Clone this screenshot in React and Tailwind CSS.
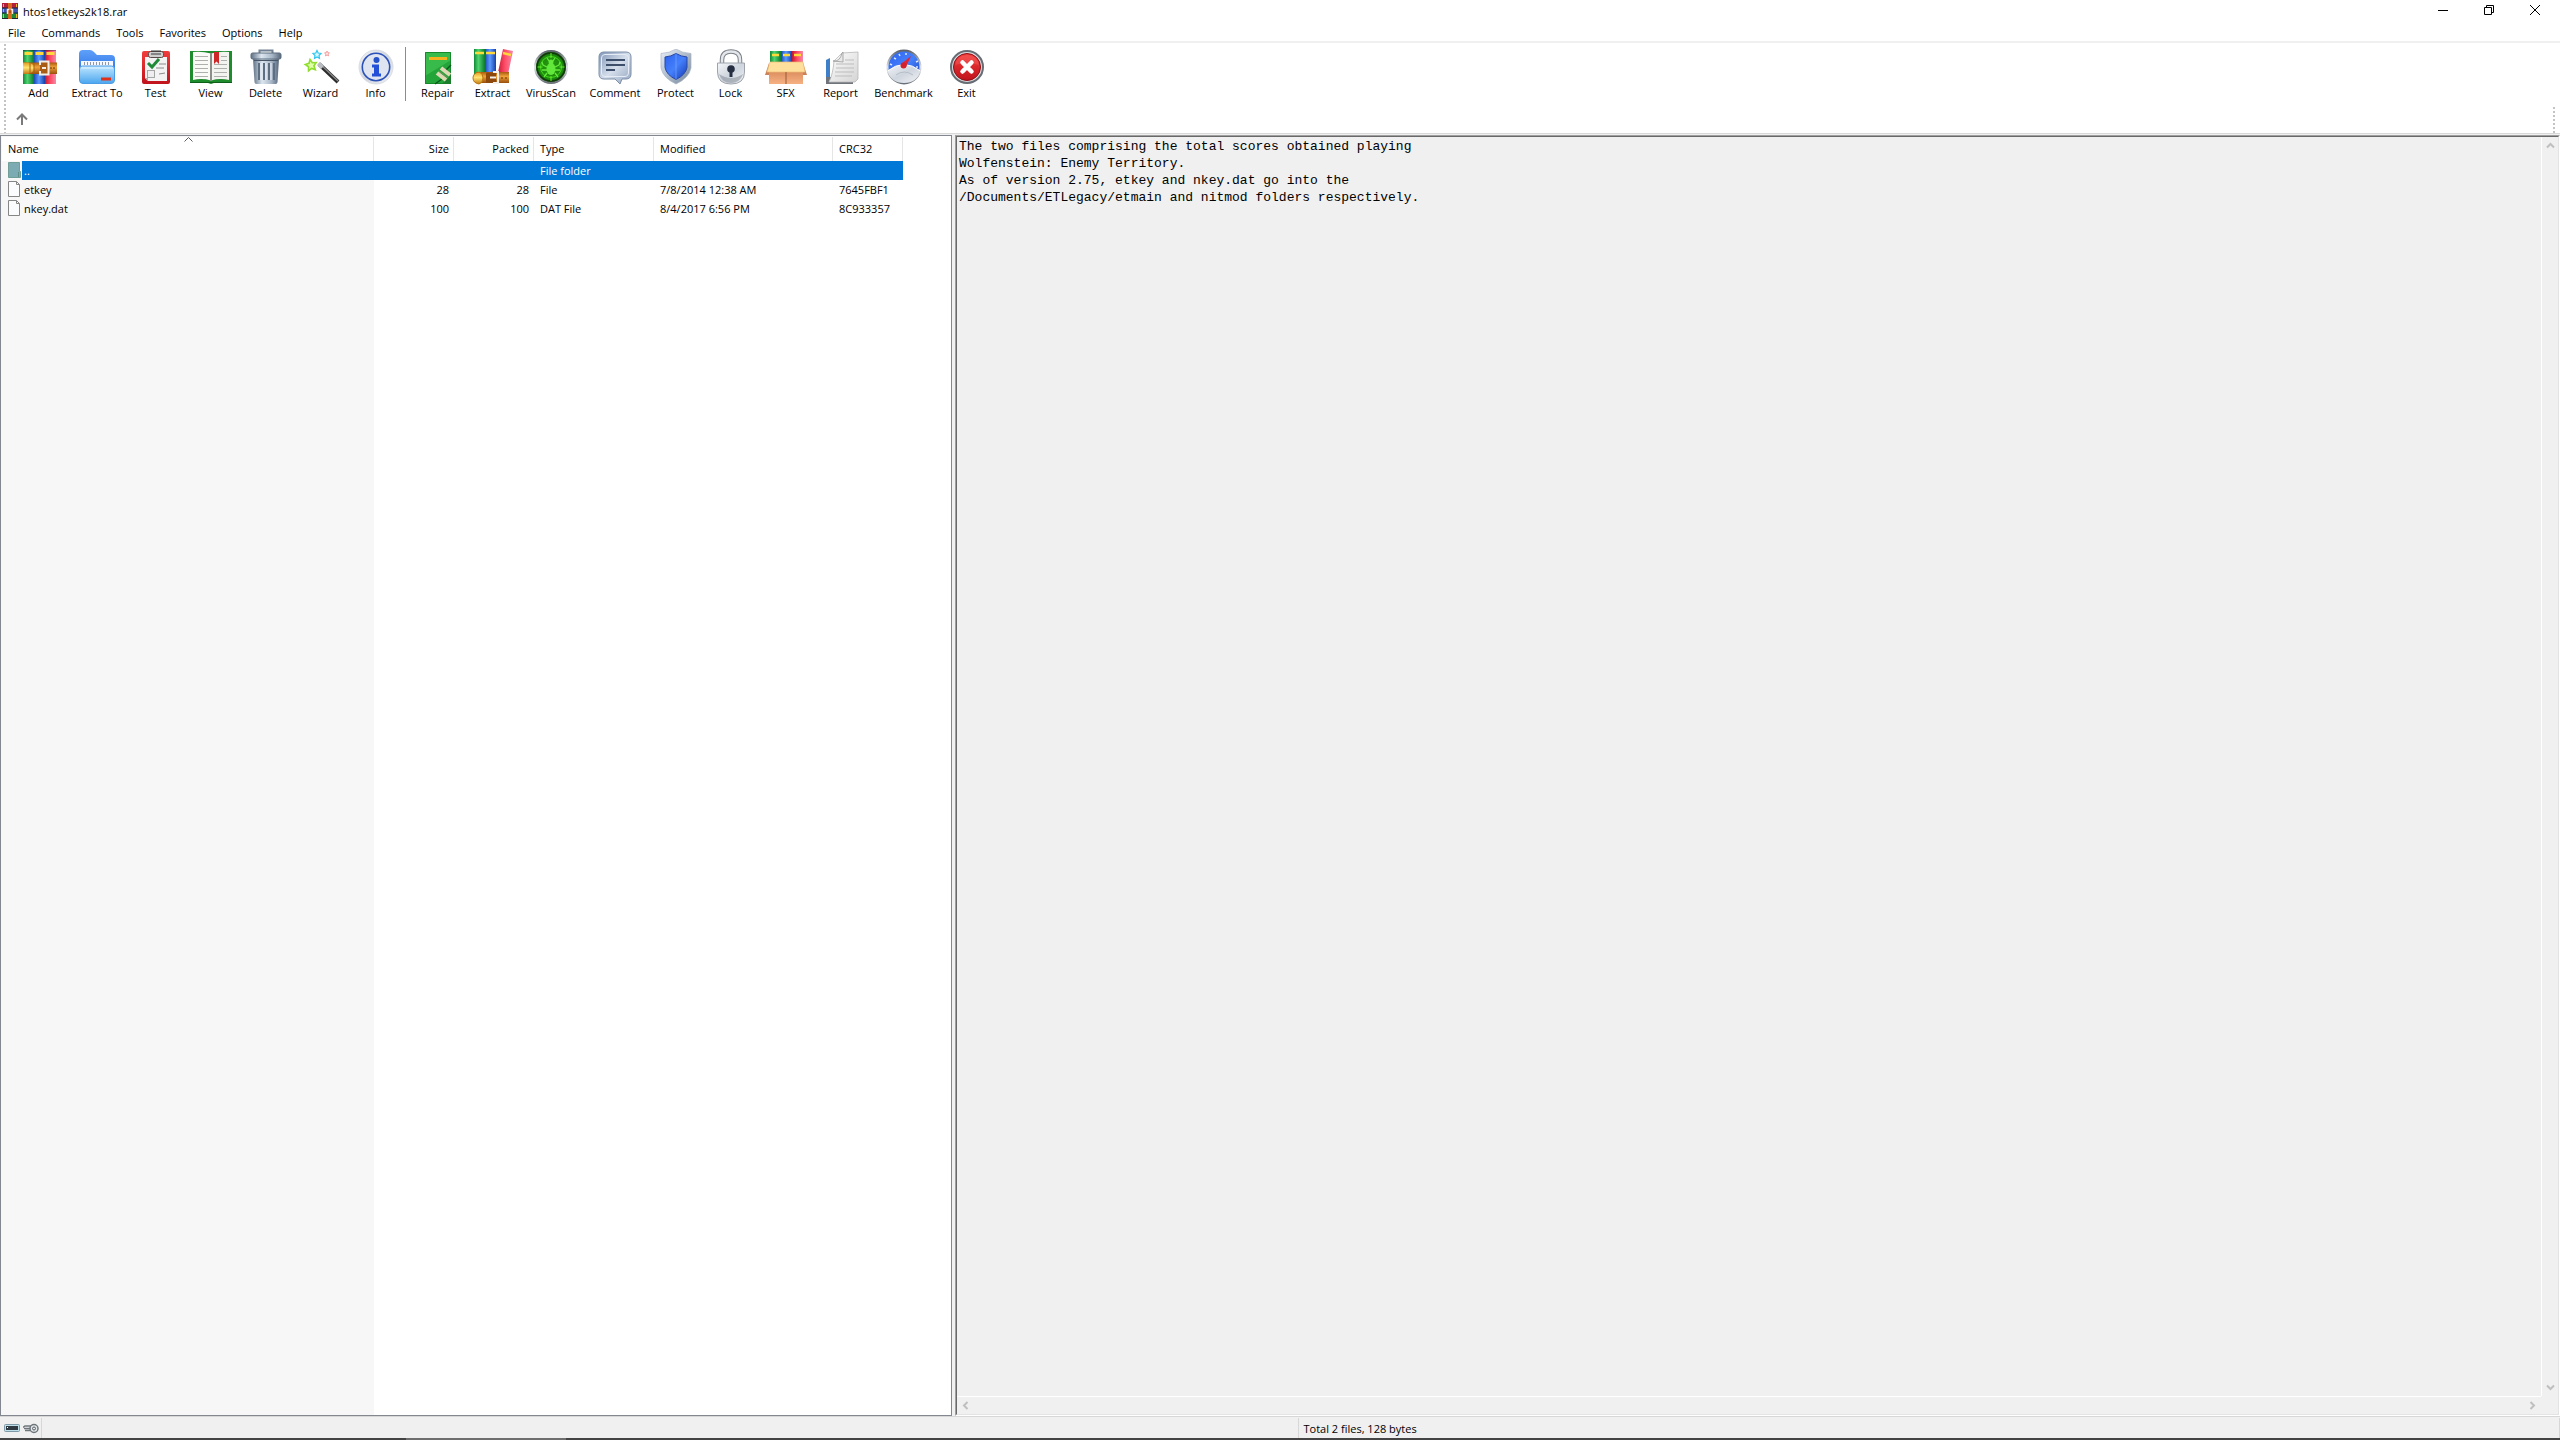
import React from "react";

const MENUS = ["File", "Commands", "Tools", "Favorites", "Options", "Help"];

const Svg = ({ children }) => (
  <svg className="block h-[36px] w-[44px]" viewBox="0 0 44 36" aria-hidden="true">
    {children}
  </svg>
);

// gradients shared by all of the toolbar drawings
const Gradients = () => (
  <svg className="absolute h-0 w-0" aria-hidden="true">
    <defs>
      <linearGradient id="green" x1="0" x2="1" y1="0" y2="0">
        <stop offset="0" stopColor="#0f8a35" />
        <stop offset=".4" stopColor="#4fd36f" />
        <stop offset="1" stopColor="#0c7a2c" />
      </linearGradient>
      <linearGradient id="blue" x1="0" x2="1" y1="0" y2="0">
        <stop offset="0" stopColor="#1c49b8" />
        <stop offset=".45" stopColor="#5c9bff" />
        <stop offset="1" stopColor="#173fa6" />
      </linearGradient>
      <linearGradient id="pink" x1="0" x2="1" y1="0" y2="0">
        <stop offset="0" stopColor="#c4152e" />
        <stop offset=".5" stopColor="#ff4d68" />
        <stop offset="1" stopColor="#f48aa8" />
      </linearGradient>
      <linearGradient id="belt" x1="0" x2="0" y1="0" y2="1">
        <stop offset="0" stopColor="#a85a10" />
        <stop offset=".4" stopColor="#f0a23a" />
        <stop offset="1" stopColor="#9a4f0c" />
      </linearGradient>
      <linearGradient id="gold" x1="0" x2="0" y1="0" y2="1">
        <stop offset="0" stopColor="#e09a1c" />
        <stop offset=".45" stopColor="#ffe372" />
        <stop offset="1" stopColor="#c47a10" />
      </linearGradient>
      <linearGradient id="folderBack" x1="0" x2="0" y1="0" y2="1">
        <stop offset="0" stopColor="#5ea0f8" />
        <stop offset="1" stopColor="#2a6ee6" />
      </linearGradient>
      <linearGradient id="folderFront" x1="0" x2="0" y1="0" y2="1">
        <stop offset="0" stopColor="#bfe6ff" />
        <stop offset="1" stopColor="#4ba6ee" />
      </linearGradient>
      <linearGradient id="red" x1="0" x2="0" y1="0" y2="1">
        <stop offset="0" stopColor="#f23c3c" />
        <stop offset="1" stopColor="#c0131b" />
      </linearGradient>
      <linearGradient id="paper" x1="0" x2="1" y1="0" y2="1">
        <stop offset="0" stopColor="#ffffff" />
        <stop offset="1" stopColor="#d4d4d4" />
      </linearGradient>
      <linearGradient id="steel" x1="0" x2="1" y1="0" y2="0">
        <stop offset="0" stopColor="#5f7184" />
        <stop offset=".35" stopColor="#dce6f0" />
        <stop offset=".7" stopColor="#a9b8c8" />
        <stop offset="1" stopColor="#56677a" />
      </linearGradient>
      <linearGradient id="silver" x1="0" x2="1" y1="0" y2="1">
        <stop offset="0" stopColor="#f4f6f9" />
        <stop offset=".5" stopColor="#cfd5de" />
        <stop offset="1" stopColor="#f2f4f7" />
      </linearGradient>
      <linearGradient id="ring" x1="0" x2="0" y1="0" y2="1">
        <stop offset="0" stopColor="#5d636a" />
        <stop offset=".5" stopColor="#dfe3e8" />
        <stop offset="1" stopColor="#6b7178" />
      </linearGradient>
      <linearGradient id="bubble" x1="0" x2="1" y1="0" y2="1">
        <stop offset="0" stopColor="#8196b8" />
        <stop offset=".5" stopColor="#d5deeb" />
        <stop offset="1" stopColor="#90a3bf" />
      </linearGradient>
      <linearGradient id="shield" x1="0" x2="1" y1="0" y2="1">
        <stop offset="0" stopColor="#2b62ee" />
        <stop offset=".5" stopColor="#4580fb" />
        <stop offset="1" stopColor="#1539b6" />
      </linearGradient>
      <linearGradient id="rim" x1="0" x2="1" y1="0" y2="1">
        <stop offset="0" stopColor="#e9f0f8" />
        <stop offset="1" stopColor="#73859b" />
      </linearGradient>
      <linearGradient id="box" x1="0" x2="0" y1="0" y2="1">
        <stop offset="0" stopColor="#d98a5a" />
        <stop offset="1" stopColor="#f6b183" />
      </linearGradient>
      <radialGradient id="scan">
        <stop offset="0" stopColor="#2a9a10" />
        <stop offset=".75" stopColor="#1c8a0c" />
        <stop offset="1" stopColor="#0b5206" />
      </radialGradient>
    </defs>
  </svg>
);

const AddIcon = () => (
  <Svg>
    <rect x="6" y="1" width="11" height="34" fill="url(#green)" />
    <rect x="17" y="1" width="11" height="34" fill="url(#blue)" />
    <rect x="28" y="1" width="11" height="34" fill="url(#pink)" />
    <path d="M6 1.500h11M17 1.500h11M28 1.500h11" stroke="#123" strokeOpacity=".4" />
    <path d="M7.500 4.500h8M18.500 4.500h8M29.500 4.500h8" stroke="#ffd83a" strokeWidth="3" />
    <rect x="6" y="13.500" width="34" height="11.500" fill="url(#belt)" />
    <path d="M6 13.500h5q6 1 6 5.500t-6 6H6z" fill="url(#gold)" />
    <path d="M13 14v10M17 14v10" stroke="#a86410" />
    <rect x="23" y="13" width="8" height="12" rx="1" fill="#a85c14" />
    <path d="M23 16v-3.500h8.500v13H23V22M25 19h4" fill="none" stroke="#f2efe8" strokeWidth="2" />
    <path d="M34 18v2M37 18v2" stroke="#6b3505" />
  </Svg>
);

const ExtractToIcon = () => (
  <Svg>
    <path d="M4 5q0-4 4-4h7q2 0 4 2l3 3h14q4 0 4 4v16H4z" fill="url(#folderBack)" />
    <path d="M6 12h32v10H6z" fill="#f4f7fb" />
    <path d="M9 14.500h27" stroke="#8f99a5" strokeWidth="3" strokeDasharray="1 2" />
    <path d="M4.500 20q0-3 3-3h29q3 0 3 3v11q0 3.500-3.500 3.500H8q-3.500 0-3.500-3.500z" fill="url(#folderFront)" stroke="#4d9ce6" />
    <path d="M6 19h32" stroke="#e3f5ff" />
    <path d="M26 30h10" stroke="#e0301a" strokeWidth="3" />
  </Svg>
);

const TestIcon = () => (
  <Svg>
    <rect x="8" y="2" width="28" height="33" rx="2" fill="url(#red)" />
    <path d="M11 8h22v24H14l-3-3z" fill="#f3f3f3" />
    <path d="M11 29l3 3v-3z" fill="#aaa" />
    <rect x="14.500" y="2.500" width="15" height="6" rx="2" fill="#cfcfcf" stroke="#5b4a4a" />
    <path d="M17 2h10M17 5h10" stroke="#3b3b3b" />
    <path d="M14 14l4 4 7-8" fill="none" stroke="#1f8a38" strokeWidth="3" />
    <path d="M25 15h7M22 19h8M25 25l6-1" stroke="#8b8b8b" />
    <rect x="13.500" y="21.500" width="7" height="7" fill="#eee" stroke="#a5a5a5" />
  </Svg>
);

const ViewIcon = () => (
  <Svg>
    <path d="M1 2h42v32H25l-3 1-3-1H1z" fill="#1e8b2d" />
    <path d="M1 33.500h42" stroke="#0e5f1a" />
    <path d="M4 3q9-1 18 1.500v27Q13 29 4 31z" fill="#fafaf7" />
    <path d="M40 3q-9-1-18 1.500v27Q31 29 40 31z" fill="#f3f3ef" />
    <path d="M22 4v28" stroke="#8b8f88" strokeWidth="2" />
    <path d="M6 7.500h13M6 11.500h13M6 15.500h13M6 19.500h13M6 23.500h13M6 27.500h13M25 15.500h13M25 19.500h13M25 23.500h13M25 27.500h13M32 7.500h6M32 11.500h6" stroke="#aeb0ad" />
    <path d="M25 3h5v12l-2.500-2.500L25 15z" fill="#cf2727" />
  </Svg>
);

const DeleteIcon = () => (
  <Svg>
    <path d="M15.500 4V1.500h13V4" fill="none" stroke="#708294" strokeWidth="2" />
    <path d="M9 10h26l-1.500 23q0 2-2 2h-19q-2 0-2-2z" fill="url(#steel)" />
    <rect x="7" y="4" width="30" height="6" rx="1.500" fill="url(#steel)" stroke="#5b6c7e" />
    <path d="M15 14v17M20 14v17M25 14v17M30 14v17" stroke="#5d6f83" strokeWidth="2" />
    <path d="M17 14v17M22 14v17M27 14v17" stroke="#eef3f8" />
    <path d="M10 11.500h24" stroke="#48586a" />
  </Svg>
);

const STAR = "M0-5l1.500 3.200 3.500.5-2.500 2.500.6 3.600L0 3.100l-3.100 1.700.6-3.600L-5-1.300l3.500-.5z";

const WizardIcon = () => (
  <Svg>
    <path d={STAR} transform="translate(12 16) scale(1.100) rotate(-10)" fill="#dfffa8" stroke="#8fdd2f" strokeWidth="1.500" />
    <path d={STAR} transform="translate(18 5.500) scale(.8)" fill="#d4f8ff" stroke="#35c6f0" strokeWidth="1.500" />
    <path d={STAR} transform="translate(28 4.500) scale(.5)" fill="#ffe3e3" stroke="#f08a8a" strokeWidth="1.500" />
    <path d="M20 15l19 18" stroke="#2c2c2c" strokeWidth="4" />
    <path d="M20 14l19 18" stroke="#8c8c8c" strokeWidth="1.200" />
    <path d="M19.500 14.500l4 4" stroke="#b9bcc0" strokeWidth="4" />
  </Svg>
);

const InfoIcon = () => (
  <Svg>
    <circle cx="22" cy="18" r="17" fill="url(#silver)" stroke="#d3d7dd" strokeWidth=".8" />
    <circle cx="22" cy="18" r="13.700" fill="#dfe5f0" stroke="#2b51b8" strokeWidth="1.600" />
    <circle cx="22.500" cy="11" r="3" fill="#2450c8" />
    <path d="M18 15.500h7v9h2v3h-9v-3h2v-6h-2z" fill="#2450d8" />
  </Svg>
);

const RepairIcon = () => (
  <Svg>
    <rect x="9" y="3" width="26" height="32" fill="#24a53a" />
    <path d="M9 3h26v8L9 27z" fill="#39bb4c" />
    <path d="M9.500 3.500h25v31h-25z" fill="none" stroke="#168a2b" />
    <path d="M13 9.500h18" stroke="#f5b21e" strokeWidth="3" />
    <path d="M35 16l-7 7M26 30l-7 5" stroke="#0c5a1c" strokeWidth="1.500" />
    <path d="M35 26v9h-9z" fill="#1a7e2d" />
    <path d="M25 19l9 7M21 24l9 7" stroke="#ded7b4" strokeWidth="4" />
    <path d="M23 22l9 7" stroke="#7e8a5e" />
  </Svg>
);

const ExtractIcon = () => (
  <Svg>
    <rect x="3" y="0" width="11" height="30" fill="url(#green)" />
    <rect x="14" y="0" width="11" height="30" fill="url(#blue)" />
    <path d="M32 0l10 2-6 28-10-2z" fill="url(#pink)" />
    <path d="M4 4h9M15 4h9M32 4l8 2" stroke="#ffd83a" strokeWidth="2.500" />
    <rect x="4" y="23" width="34" height="11" fill="url(#belt)" />
    <path d="M8 23q-6 1-6 6t6 6q4-1 4-6t-4-6z" fill="url(#gold)" stroke="#b8740f" />
    <rect x="15" y="23.500" width="10" height="10.500" rx="1" fill="#8d480c" />
    <path d="M22 23h5v11h-5M19 28.500h6" fill="none" stroke="#f3f0ea" strokeWidth="2" />
    <path d="M31 28v2M35 28v2" stroke="#6b3505" />
  </Svg>
);

const VirusScanIcon = () => (
  <Svg>
    <circle cx="22" cy="18" r="16" fill="url(#scan)" stroke="url(#ring)" strokeWidth="2" />
    <circle cx="22" cy="18" r="14" fill="none" stroke="#14380d" strokeWidth="1.500" />
    <circle cx="22" cy="18" r="10.500" fill="none" stroke="#47d81e" strokeWidth="1" />
    <path d="M22 4v5M22 27v5M8.500 18h5M30.500 18h5" stroke="#62f02e" />
    <ellipse cx="22" cy="20" rx="4.500" ry="6" fill="#62e83a" />
    <circle cx="22" cy="13" r="2.500" fill="#62e83a" />
    <path d="M18 18l-4-2-1-3M26 18l4-2 1-3M18 21h-5M26 21h5M18 24l-3 4M26 24l3 4M20 12l-2-3M24 12l2-3" fill="none" stroke="#62e83a" strokeWidth="1.300" />
  </Svg>
);

const CommentIcon = () => (
  <Svg>
    <path d="M11 3h22q5 0 5 5v17q0 5-5 5h-4l-2 5-5-5H11q-5 0-5-5V8q0-5 5-5z" fill="url(#bubble)" stroke="#7d8fa9" />
    <rect x="8.500" y="5.500" width="27" height="22" rx="3.500" fill="none" stroke="#e6ecf5" />
    <path d="M13 11h19M13 16h19M13 21h9" stroke="#3e4f6c" strokeWidth="2" />
  </Svg>
);

const ProtectIcon = () => (
  <Svg>
    <path d="M22 0q6 4 15 4.500V19q-2 10-15 16Q9 29 7 19V4.500Q16 4 22 0z" fill="url(#rim)" stroke="#a7b3c1" strokeWidth=".7" />
    <path d="M22 4.500q5 3 11 3.500v10.500Q31.500 26 22 30.500 12.500 26 11 18.500V8q6-.5 11-3.500z" fill="url(#shield)" stroke="#2748a5" />
    <path d="M22 4.500v26" stroke="#7aa6ff" strokeWidth=".7" />
  </Svg>
);

const LockIcon = () => (
  <Svg>
    <path d="M13 15v-4q0-8.500 9-8.500T31 11v4" fill="none" stroke="#7c8189" strokeWidth="4.500" />
    <path d="M13 15v-4q0-8.500 9-8.500T31 11v4" fill="none" stroke="#e3e6ea" strokeWidth="2.500" />
    <path d="M8.500 14h27v9q0 12-13.500 12T8.500 23z" fill="url(#silver)" stroke="#9ea4ac" />
    <path d="M10 25q3 9 12 9t12-9q-6 4-12 4t-12-4z" fill="#8c939c" opacity=".6" />
    <circle cx="22" cy="20" r="3.800" fill="#262f42" />
    <path d="M20.500 22h3v6h-3z" fill="#262f42" />
  </Svg>
);

const SfxIcon = () => (
  <Svg>
    <rect x="6" y="2" width="11" height="14" fill="url(#green)" />
    <rect x="17" y="2" width="11" height="14" fill="url(#blue)" />
    <rect x="28" y="2" width="11" height="14" fill="url(#pink)" />
    <path d="M8 6h7M19 6h7M30 6h7" stroke="#ffd83a" strokeWidth="2.500" />
    <path d="M5 14L1 26h5zM39 14l4 12h-4z" fill="#c9825a" />
    <path d="M5 21h34v14H5z" fill="url(#box)" />
    <path d="M6 13h33l2 10H3z" fill="#ffdf9c" stroke="#eebb77" strokeWidth=".7" />
    <path d="M22 23v12" stroke="#9a5a36" />
  </Svg>
);

const ReportIcon = () => (
  <Svg>
    <path d="M7 11l4-2v26H7z" fill="#3f7fc8" />
    <path d="M7 28h27v7H7z" fill="#6e747a" />
    <path d="M15 12l8-8 16-1v27l-3 3H10q4-8 5-21z" fill="url(#paper)" stroke="#b8b8b8" strokeWidth=".8" />
    <path d="M14 12q7 1 9-8l1-1v10z" fill="#e8e8e8" stroke="#9b9b9b" strokeWidth=".8" />
    <path d="M26 11h9M17 15h18M17 19h18M16 23h19M16 27h17" stroke="#bdbdbd" />
  </Svg>
);

const BenchmarkIcon = () => (
  <Svg>
    <circle cx="22" cy="18" r="16.500" fill="url(#shield)" stroke="url(#ring)" strokeWidth="2" />
    <path d="M10 16l-2-1M12 9l2 1M17 5l1 2M24 4v2M34 13l2-1M36 18h-2" stroke="#dbe7ff" strokeWidth="1.500" />
    <path d="M5.500 22Q22 9 38.500 22 35 34 22 34T5.500 22z" fill="url(#silver)" />
    <path d="M5.500 22Q22 9 38.500 22" fill="none" stroke="#fff" />
    <path d="M14 26q8-6 17 0" fill="none" stroke="#b7bdc6" />
    <path d="M19 15l10-8-5 11q-3 2-5-3z" fill="#e02534" />
    <circle cx="21.500" cy="16.500" r="3" fill="#d3202f" />
  </Svg>
);

const ExitIcon = () => (
  <Svg>
    <circle cx="22" cy="18" r="16" fill="#d8dce0" stroke="#676d74" strokeWidth="2" />
    <circle cx="22" cy="18" r="13.500" fill="url(#red)" stroke="#8e1016" />
    <path d="M10 16q2-10 12-10t12 10q-12-4-24 0z" fill="#ff7b76" opacity=".3" />
    <path d="M17.500 13.500l9 9M26.500 13.500l-9 9" stroke="#fff" strokeWidth="4.500" strokeLinecap="round" />
  </Svg>
);

const FILE_TOOLS = [
  { label: "Add", Icon: AddIcon, width: "w-[55px]" },
  { label: "Extract To", Icon: ExtractToIcon, width: "w-[62px]" },
  { label: "Test", Icon: TestIcon, width: "w-[55px]" },
  { label: "View", Icon: ViewIcon, width: "w-[55px]" },
  { label: "Delete", Icon: DeleteIcon, width: "w-[55px]" },
  { label: "Wizard", Icon: WizardIcon, width: "w-[55px]" },
  { label: "Info", Icon: InfoIcon, width: "w-[55px]" },
];

const ARCHIVE_TOOLS = [
  { label: "Repair", Icon: RepairIcon, width: "w-[55px]" },
  { label: "Extract", Icon: ExtractIcon, width: "w-[55px]" },
  { label: "VirusScan", Icon: VirusScanIcon, width: "w-[62px]" },
  { label: "Comment", Icon: CommentIcon, width: "w-[66px]" },
  { label: "Protect", Icon: ProtectIcon, width: "w-[55px]" },
  { label: "Lock", Icon: LockIcon, width: "w-[55px]" },
  { label: "SFX", Icon: SfxIcon, width: "w-[55px]" },
  { label: "Report", Icon: ReportIcon, width: "w-[55px]" },
  { label: "Benchmark", Icon: BenchmarkIcon, width: "w-[71px]" },
  { label: "Exit", Icon: ExitIcon, width: "w-[55px]" },
];

const FILES = [
  { name: "..", type: "File folder", selected: true },
  { name: "etkey", size: "28", packed: "28", type: "File", modified: "7/8/2014 12:38 AM", crc: "7645FBF1" },
  { name: "nkey.dat", size: "100", packed: "100", type: "DAT File", modified: "8/4/2017 6:56 PM", crc: "8C933357" },
];

const COMMENT = `The two files comprising the total scores obtained playing
Wolfenstein: Enemy Territory.
As of version 2.75, etkey and nkey.dat go into the
/Documents/ETLegacy/etmain and nitmod folders respectively.`;

const AppLogo = () => (
  <svg className="h-[16px] w-[16px]" viewBox="0 0 16 16" aria-hidden="true">
    <rect width="16" height="5" fill="#b3203c" />
    <rect y="5" width="16" height="5" fill="#3d55b5" />
    <rect y="10" width="16" height="6" fill="#1d8a3a" />
    <path d="M0 5h16M0 10h16M0 15.500h16" stroke="#1e2430" />
    <path d="M1.500 1v3M1.500 6v3M1.500 11v4M14.500 1v3M14.500 11v4" stroke="#e9b72c" />
    <rect x="6" width="4" height="16" fill="#d9691c" />
    <path d="M5.500 11V6.500h5V11" fill="none" stroke="#f4e9dc" strokeWidth="1.500" />
    <path d="M8 6v4" stroke="#8a3a08" />
  </svg>
);

const FileIcon = ({ folder }) =>
  folder ? (
    <svg className="h-[17px] w-[14px]" viewBox="0 0 14 17" aria-hidden="true">
      <path d="M.5.500h11v9h1v6H.5z" fill="#7dabb3" stroke="#6f9f96" />
      <path d="M10.500 10v5" stroke="#5f8f88" />
    </svg>
  ) : (
    <svg className="h-[17px] w-[14px]" viewBox="0 0 14 17" aria-hidden="true">
      <path d="M.5.500h8l3 3v12H.5z" fill="#fbfcfd" stroke="#868686" />
      <path d="M8.500.500v3h3" fill="none" stroke="#868686" />
    </svg>
  );

const Chevron = ({ d }) => (
  <svg className="h-[9px] w-[9px]" viewBox="0 0 9 9" fill="none" stroke="#bfbfbf" strokeWidth="2" aria-hidden="true">
    <path d={d} />
  </svg>
);

const Grip = ({ className = "" }) => (
  <div className={`w-[2px] bg-[repeating-linear-gradient(to_bottom,#c4c4c4_0_2px,transparent_2px_4px)] ${className}`} />
);

const ToolButton = ({ label, Icon, width }) => (
  <button className={`flex flex-col items-center pt-[5px] ${width}`}>
    <Icon />
    <span className="text-[11px] leading-[16px] whitespace-nowrap">{label}</span>
  </button>
);

const TitleBar = () => (
  <header className="flex h-[24px] justify-between">
    <div className="flex items-start gap-[5px] pt-[3px] pl-[2px]">
      <AppLogo />
      <h1 className="text-[11px] leading-[18px]">htos1etkeys2k18.rar</h1>
    </div>
    <div className="flex pr-[2px]">
      <button aria-label="Minimize" className="flex h-[20px] w-[46px] items-center justify-center">
        <svg className="h-[10px] w-[10px]" viewBox="0 0 10 10" stroke="#000"><path d="M0 5.500h10" /></svg>
      </button>
      <button aria-label="Restore" className="flex h-[20px] w-[46px] items-center justify-center">
        <svg className="h-[10px] w-[10px]" viewBox="0 0 10 10" fill="none" stroke="#000">
          <path d="M.5 2.500h7v7h-7zM2.500 2.500v-2h7v7h-2" />
        </svg>
      </button>
      <button aria-label="Close" className="flex h-[20px] w-[46px] items-center justify-center">
        <svg className="h-[10px] w-[10px]" viewBox="0 0 10 10" stroke="#000"><path d="M0 0l10 10M10 0L0 10" /></svg>
      </button>
    </div>
  </header>
);

const Toolbar = () => (
  <div className="flex h-[90px] pt-px pl-[4px]">
    <Grip className="mr-[5px]" />
    <div className="flex min-w-0 flex-1 flex-col">
      <div className="flex h-[63px] items-start">
        {FILE_TOOLS.map((t) => <ToolButton key={t.label} {...t} />)}
        <div className="mt-[3px] mr-[4px] ml-[2px] h-[54px] w-px bg-[#8c8c8c]" />
        {ARCHIVE_TOOLS.map((t) => <ToolButton key={t.label} {...t} />)}
      </div>
      <div className="flex flex-1 justify-between pr-[5px]">
        <button aria-label="Up one level" className="flex w-[22px] items-start justify-center pt-[6px]">
          <svg className="h-[12px] w-[12px]" viewBox="0 0 12 12" fill="none" stroke="#7a7a7a" strokeWidth="2">
            <path d="M6 12V1.500M1 6.500l5-5 5 5" />
          </svg>
        </button>
        <Grip />
      </div>
    </div>
  </div>
);

const HEAD = "h-[24px] border-r border-[#e5e5e5] bg-white pb-[2px] font-normal";

const FileList = () => (
  <section className="overflow-hidden border border-[#828790] bg-[linear-gradient(to_right,#f7f7f7_373px,#ffffff_373px)] pt-px pl-px">
    <div className="bg-white">
      <table className="w-[901px] table-fixed border-separate border-spacing-0 text-[11px] leading-[19px]">
        <thead>
          <tr>
            <th className={`relative w-[372px] pl-[6px] text-left ${HEAD}`}>
              Name
              <svg className="absolute top-0 left-[182px] h-[5px] w-[9px]" viewBox="0 0 9 5" fill="none" stroke="#5c5c5c">
                <path d="M.5 4.500l4-4 4 4" />
              </svg>
            </th>
            <th className={`w-[80px] pr-[4px] text-right ${HEAD}`}>Size</th>
            <th className={`w-[80px] pr-[4px] text-right ${HEAD}`}>Packed</th>
            <th className={`w-[120px] pl-[6px] text-left ${HEAD}`}>Type</th>
            <th className={`w-[179px] pl-[6px] text-left ${HEAD}`}>Modified</th>
            <th className={`w-[70px] pl-[6px] text-left ${HEAD}`}>CRC32</th>
          </tr>
        </thead>
        <tbody>
          {FILES.map((f) => {
            const cell = f.selected ? "bg-[#0078d7] text-white" : "bg-white";
            return (
              <tr key={f.name} className="h-[19px] whitespace-nowrap">
                <td className="bg-[#f7f7f7] p-0">
                  <div className="flex h-[19px]">
                    <span className="flex w-[20px] items-center pl-[6px]"><FileIcon folder={f.selected} /></span>
                    <span className={`flex-1 pl-[2px] ${f.selected ? "bg-[#0078d7] text-white" : ""}`}>{f.name}</span>
                  </div>
                </td>
                <td className={`pr-[5px] text-right ${cell}`}>{f.size}</td>
                <td className={`pr-[5px] text-right ${cell}`}>{f.packed}</td>
                <td className={`pl-[6px] ${cell}`}>{f.type}</td>
                <td className={`pl-[6px] ${cell}`}>{f.modified}</td>
                <td className={`pl-[6px] ${cell}`}>{f.crc}</td>
              </tr>
            );
          })}
        </tbody>
      </table>
    </div>
  </section>
);

const CommentPane = () => (
  <section className="flex border border-t-[#a0a0a0] border-r-white border-b-white border-l-[#a0a0a0]">
    <div className="grid flex-1 grid-cols-[1fr_17px] grid-rows-[1fr_18px] border border-t-[#696969] border-r-[#e3e3e3] border-b-[#e3e3e3] border-l-[#696969]">
      <textarea
        aria-label="Archive comment"
        readOnly
        value={COMMENT}
        className="resize-none overflow-hidden bg-[#f0f0f0] pt-px pl-[2px] font-['Liberation_Mono',monospace] text-[13px] leading-[17px] outline-none"
      />
      <div className="flex flex-col justify-between border-l border-white">
        <button aria-label="Scroll up" className="flex h-[17px] items-center justify-center"><Chevron d="M1 6.500l3.500-3.500L8 6.500" /></button>
        <button aria-label="Scroll down" className="flex h-[17px] items-center justify-center"><Chevron d="M1 2.500l3.500 3.500L8 2.500" /></button>
      </div>
      <div className="flex justify-between border-t border-white">
        <button aria-label="Scroll left" className="flex w-[17px] items-center justify-center"><Chevron d="M6.500 1L3 4.500 6.500 8" /></button>
        <button aria-label="Scroll right" className="flex w-[17px] items-center justify-center"><Chevron d="M2.500 1L6 4.500 2.500 8" /></button>
      </div>
    </div>
  </section>
);

const StatusBar = () => (
  <footer className="flex h-[22px] border-t border-[#d7d7d7] pt-px text-[11px] leading-[22px]">
    <div className="flex w-[42px] items-center gap-[3px] border-r border-[#d7d7d7] pl-[4px]">
      <svg className="h-[10px] w-[16px]" viewBox="0 0 16 10" aria-hidden="true">
        <rect x=".5" y="1.500" width="15" height="7" rx="1" fill="#bfe0ea" stroke="#7e9aa6" />
        <rect x="2" y="3" width="12" height="4" fill="#2f3a42" />
        <path d="M3 4.500h1" stroke="#fff" />
      </svg>
      <svg className="h-[11px] w-[16px]" viewBox="0 0 16 11" fill="none" aria-hidden="true">
        <path d="M8 3H2L0 4.500M8 5.500H1M7 7.500H2" stroke="#6e767c" strokeWidth="1.500" />
        <circle cx="11" cy="5.500" r="4" fill="#e4e8ea" stroke="#6e767c" strokeWidth="1.500" />
        <circle cx="11" cy="5.500" r="1.500" stroke="#565c61" />
      </svg>
    </div>
    <div className="flex-1 border-r border-[#d7d7d7]" />
    <div className="flex-1 border-r border-[#d7d7d7] pl-[5px]">Total 2 files, 128 bytes</div>
  </footer>
);

const App = () => {
  return (
    <div className="flex h-screen flex-col overflow-hidden bg-[#f0f0f0] font-['Open_Sans','Noto_Sans',sans-serif] text-black">
      <Gradients />
      <div className="border-b border-[#d9d9d9] bg-white">
        <TitleBar />
        <nav className="flex h-[19px] border-b-2 border-[#f0f0f0]">
          {MENUS.map((m) => (
            <button key={m} className="px-[8px] text-[11px] leading-[17px]">{m}</button>
          ))}
        </nav>
        <Toolbar />
      </div>
      <main className="grid min-h-0 flex-1 grid-cols-[952fr_1605fr] gap-[3px] pt-px">
        <FileList />
        <CommentPane />
      </main>
      <StatusBar />
      <div className="flex h-[2px] bg-[#444444]">
        <div className="ml-[406px] w-[160px] bg-[#6e6e6e]" />
      </div>
    </div>
  );
};

export default App;
